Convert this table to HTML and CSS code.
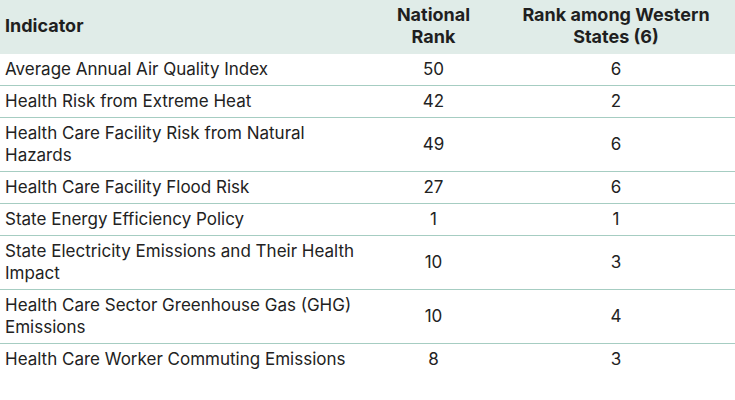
FILE: index.html
```html
<!DOCTYPE html>
<html lang="en">
<head>
<meta charset="utf-8">
<title>Indicators</title>
<link rel="stylesheet" href="styles.css">
</head>
<body>
<table class="rank-table">
  <colgroup>
    <col class="col-ind">
    <col class="col-nat">
    <col class="col-west">
  </colgroup>
  <thead>
    <tr>
      <th class="th-left">Indicator</th>
      <th>National<br>Rank</th>
      <th>Rank among Western<br>States (6)</th>
    </tr>
  </thead>
  <tbody>
    <tr><td class="ind">Average Annual Air Quality Index</td><td>50</td><td>6</td></tr>
    <tr><td class="ind">Health Risk from Extreme Heat</td><td>42</td><td>2</td></tr>
    <tr><td class="ind">Health Care Facility Risk from Natural Hazards</td><td>49</td><td>6</td></tr>
    <tr><td class="ind">Health Care Facility Flood Risk</td><td>27</td><td>6</td></tr>
    <tr><td class="ind">State Energy Efficiency Policy</td><td>1</td><td>1</td></tr>
    <tr><td class="ind">State Electricity Emissions and Their Health Impact</td><td>10</td><td>3</td></tr>
    <tr><td class="ind">Health Care Sector Greenhouse Gas (GHG) Emissions</td><td>10</td><td>4</td></tr>
    <tr><td class="ind">Health Care Worker Commuting Emissions</td><td>8</td><td>3</td></tr>
  </tbody>
</table>
</body>
</html>
```

FILE: styles.css
```css
html, body {
  margin: 0;
  padding: 0;
  background: #ffffff;
}

body {
  font-family: "Inter", "Liberation Sans", sans-serif;
  font-size: 17px;
  line-height: 22px;
  color: #222222;
}

.rank-table {
  width: 735px;
  border-collapse: collapse;
  table-layout: fixed;
}

.col-ind { width: 370px; }
.col-nat { width: 127px; }
.col-west { width: 238px; }

.rank-table thead th {
  background: #e0ece8;
  font-size: 18px;
  font-weight: 700;
  text-align: center;
  vertical-align: middle;
  padding: 4px 5px 6px;
  color: #1f1f1f;
}

.rank-table thead .th-left {
  text-align: left;
}

.rank-table td {
  padding: 4px 5px 5px;
  text-align: center;
  vertical-align: middle;
  border-bottom: 1px solid #a6cdc2;
}

.rank-table td.ind {
  text-align: left;
}

.rank-table tbody tr:last-child td {
  border-bottom: none;
}
```
